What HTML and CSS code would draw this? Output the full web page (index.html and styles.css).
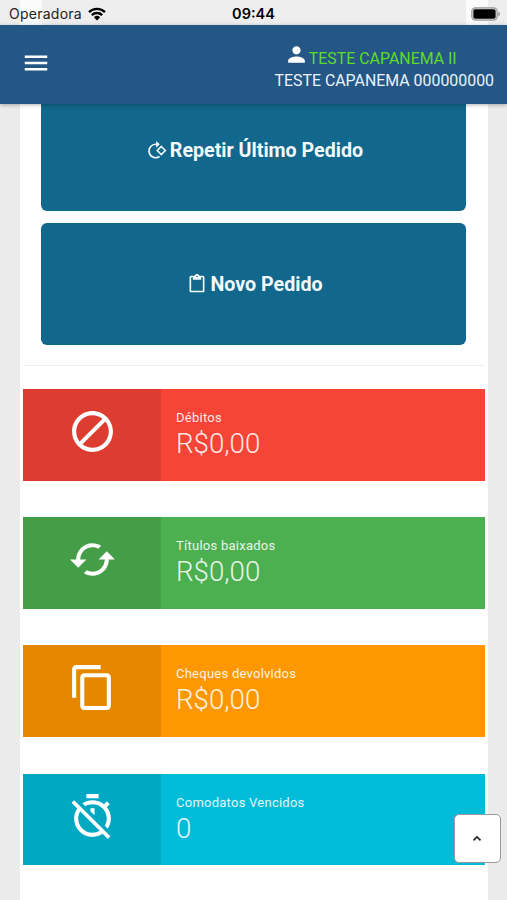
FILE: index.html
```
<!DOCTYPE html>
<html lang="pt-BR">
<head>
    <meta charset="UTF-8">
    <meta name="viewport" content="width=device-width, initial-scale=1.0">
    <title>Pedidos</title>
    <link rel="stylesheet" href="styles.css">
</head>
<body>

<div class="statusbar">
    <div class="carrier">
        <span>Operadora</span>
        <svg class="wifi" viewBox="0 0 18 14">
            <path d="M1 5.2a11.5 11.5 0 0 1 16 0M3.8 8.1a7.5 7.5 0 0 1 10.4 0" fill="none" stroke="#000" stroke-width="2.3"/>
            <path d="M5.8 10.2a4.7 4.7 0 0 1 6.4 0L9 13.6z"/>
        </svg>
    </div>
    <div class="clock">09:44</div>
    <svg class="battery" viewBox="0 0 30 14">
        <rect x="0.8" y="0.8" width="25.4" height="12.4" rx="3.6" fill="#ddd" stroke="#999" stroke-width="1.2"/>
        <rect x="2.4" y="2.3" width="22.2" height="9.4" rx="1.8"/>
        <path d="M27.3 4.8c2.4.7 2.4 3.7 0 4.4z" fill="#999"/>
    </svg>
</div>

<header class="navbar">
    <svg class="menu" viewBox="0 0 24 24"><path d="M3 18h18v-2H3v2zm0-5h18v-2H3v2zm0-7v2h18V6H3z"/></svg>
    <div class="user">
        <div class="user-name">
            <svg viewBox="0 0 24 24"><path d="M12 12c2.21 0 4-1.79 4-4s-1.79-4-4-4-4 1.79-4 4 1.79 4 4 4zm0 2c-2.67 0-8 1.34-8 4v2h16v-2c0-2.66-5.33-4-8-4z"/></svg>
            <span>TESTE CAPANEMA II</span>
        </div>
        <div class="company">TESTE CAPANEMA 000000000</div>
    </div>
</header>

<main class="content">
    <div class="actions">
        <button class="btn">
            <svg viewBox="0 0 20 20">
                <path d="M10.500 4.300H9.200A6.700 6.700 0 1 0 12.500 16.500M14.300 6.500l4 4-4 4-4-4z" fill="none" stroke="currentColor" stroke-width="1.600"/>
                <path d="M9.200.9l3.600 3.400-3.600 3.400z"/>
            </svg>
            <span>Repetir Último Pedido</span>
        </button>
        <button class="btn">
            <svg viewBox="0 0 24 24"><path d="M19 2h-4.180C14.400.84 13.300 0 12 0S9.600.84 9.180 2H5c-1.100 0-2 .9-2 2v16c0 1.100.9 2 2 2h14c1.100 0 2-.9 2-2V4c0-1.100-.9-2-2-2zm-7 0c.55 0 1 .45 1 1s-.45 1-1 1-1-.45-1-1 .45-1 1-1zm7 18H5V4h2v3h10V4h2v16z"/></svg>
            <span>Novo Pedido</span>
        </button>
    </div>

    <hr>

    <div class="cards">
        <div class="info-box red">
            <div class="icon">
                <svg viewBox="0 0 24 24"><path d="M12 2C6.5 2 2 6.5 2 12s4.500 10 10 10 10-4.500 10-10S17.500 2 12 2zM4 12c0-4.400 3.600-8 8-8 1.800 0 3.500.6 4.900 1.700L5.700 16.900C4.600 15.500 4 13.800 4 12zm8 8c-1.800 0-3.500-.6-4.900-1.700L18.300 7.100C19.400 8.500 20 10.200 20 12c0 4.400-3.600 8-8 8z"/></svg>
            </div>
            <div class="info">
                <div class="label">Débitos</div>
                <div class="value">R$0,00</div>
            </div>
        </div>
        <div class="info-box green">
            <div class="icon">
                <svg viewBox="0 0 24 24"><path d="M19 8l-4 4h3c0 3.310-2.690 6-6 6-1.010 0-1.970-.25-2.800-.7l-1.460 1.460C8.970 19.540 10.430 20 12 20c4.420 0 8-3.580 8-8h3l-4-4zM6 12c0-3.310 2.690-6 6-6 1.010 0 1.970.25 2.800.7l1.460-1.460C15.030 4.460 13.570 4 12 4c-4.420 0-8 3.580-8 8H1l4 4 4-4H6z"/></svg>
            </div>
            <div class="info">
                <div class="label">Títulos baixados</div>
                <div class="value">R$0,00</div>
            </div>
        </div>
        <div class="info-box orange">
            <div class="icon">
                <svg viewBox="0 0 24 24"><path d="M16 1H4c-1.100 0-2 .9-2 2v14h2V3h12V1zm3 4H8c-1.100 0-2 .9-2 2v14c0 1.100.9 2 2 2h11c1.100 0 2-.9 2-2V7c0-1.100-.9-2-2-2zm0 16H8V7h11v14z"/></svg>
            </div>
            <div class="info">
                <div class="label">Cheques devolvidos</div>
                <div class="value">R$0,00</div>
            </div>
        </div>
        <div class="info-box cyan">
            <div class="icon">
                <svg viewBox="0 0 24 24"><path d="M19.040 4.550l-1.420 1.420C16.070 4.740 14.120 4 12 4c-1.830 0-3.530.55-4.950 1.480l1.460 1.460C9.530 6.350 10.730 6 12 6c3.870 0 7 3.130 7 7 0 1.270-.35 2.470-.94 3.490l1.450 1.450C20.450 16.530 21 14.830 21 13c0-2.120-.74-4.070-1.970-5.610l1.420-1.420-1.410-1.420zM15 1H9v2h6V1zm-4 8.440l2 2V8h-2v1.440zM3.020 4L1.750 5.270 4.500 8.030C3.550 9.450 3 11.160 3 13c0 4.970 4.020 9 9 9 1.840 0 3.550-.55 4.980-1.500l2.500 2.500 1.270-1.270-7.710-7.710L3.020 4zM12 20c-3.870 0-7-3.130-7-7 0-1.280.35-2.480.95-3.520l9.560 9.560c-1.030.61-2.230.96-3.510.96z"/></svg>
            </div>
            <div class="info">
                <div class="label">Comodatos Vencidos</div>
                <div class="value">0</div>
            </div>
        </div>
    </div>
</main>

<button class="to-top">
    <svg viewBox="0 0 10 7"><path d="M1.500 5.300 5 2l3.500 3.300" fill="none" stroke="#222" stroke-width="1.700"/></svg>
</button>

</body>
</html>
```
FILE: styles.css
```
* {
    box-sizing: border-box;
}
body {
    margin: 0;
    height: 900px;
    overflow: hidden;
    background-color: #ebebeb;
    font-family: Roboto, "Liberation Sans", sans-serif;
}
svg {
    display: block;
    flex: none;
}

/* Status bar */
.statusbar {
    display: grid;
    grid-template-columns: 1fr auto 1fr;
    align-items: center;
    height: 25px;
    padding: 2px 6px 0 9px;
    background: linear-gradient(to right, #eee 20px, #fbfbfb 20px, #fbfbfb 42px, #eee 42px, #eee 466px, #fbfbfb 466px, #fbfbfb 488px, #eee 488px);
    font-family: Inter, sans-serif;
    font-size: 14px;
    color: #222;
}
.carrier {
    display: flex;
    align-items: center;
    gap: 6px;
    letter-spacing: 0.25px;
}
.wifi {
    width: 18px;
    height: 14px;
}
.clock {
    padding-right: 3px;
    font-weight: 600;
    font-size: 14.5px;
    color: #000;
}
.battery {
    width: 30px;
    height: 14px;
    justify-self: end;
}

/* Top bar */
.navbar {
    position: relative;
    display: flex;
    justify-content: space-between;
    height: 79px;
    padding: 17px 13px 0 21px;
    background-color: #245785;
    box-shadow: 0 1px 4px rgba(0, 0, 0, 0.3);
    color: #eaf3fb;
    font-size: 15.9px;
}
.menu {
    width: 30px;
    height: 30px;
    margin-top: 6px;
    fill: #fff;
}
.user {
    text-align: center;
}
.user-name {
    display: flex;
    justify-content: center;
    height: 26px;
    padding-right: 28px;
    color: #5fdc2b;
}
.user-name svg {
    width: 25px;
    height: 25px;
    fill: #fff;
}
.user-name span {
    line-height: 33px;
}
.company {
    line-height: 25px;
}

/* Page */
.content {
    height: 796px;
    margin: 0 19px 0 20px;
    padding: 0 3px;
    overflow: hidden;
    background-color: #fff;
}
.actions {
    display: flex;
    flex-direction: column;
    gap: 12px;
    margin: -15px 19px 0 18px;
}
.btn {
    display: flex;
    align-items: center;
    justify-content: center;
    gap: 3px;
    height: 122px;
    padding: 1px 0 0 3px;
    border: none;
    border-radius: 6px;
    background-color: #11678c;
    color: #f4fbff;
    font-family: inherit;
    font-size: 19.65px;
    font-weight: 700;
}
.btn svg {
    width: 20px;
    height: 20px;
    margin-top: -2px;
    fill: currentColor;
}
hr {
    margin: 20px 0 23px;
    border: none;
    border-top: 1px solid #eee;
}
.cards {
    display: flex;
    flex-direction: column;
    gap: 36.4px;
}
.info-box {
    display: flex;
    height: 91.8px;
    color: #fff;
}
.red {
    background-color: #f64437;
}
.green {
    background-color: #4caf50;
}
.orange {
    background-color: #ff9800;
}
.cyan {
    background-color: #00bcd8;
}
.icon {
    width: 138px;
    padding-top: 18px;
    background-color: rgba(0, 0, 0, 0.1);
}
.icon svg {
    width: 49px;
    height: 49px;
    margin: 0 auto;
    fill: #fff;
}
.info {
    padding: 20px 15px 0;
    opacity: 0.88;
}
.label {
    font-size: 13px;
    letter-spacing: 0.25px;
    line-height: 18px;
}
.value {
    font-size: 27.7px;
    font-weight: 300;
    line-height: 33px;
}

/* Back to top */
.to-top {
    position: fixed;
    right: 6px;
    bottom: 37px;
    display: flex;
    align-items: center;
    justify-content: center;
    width: 47px;
    height: 49px;
    padding: 0 2px 0 0;
    border: 1px solid #999;
    border-radius: 5px;
    background-color: #fff;
}
.to-top svg {
    width: 10px;
    height: 7px;
}
```
